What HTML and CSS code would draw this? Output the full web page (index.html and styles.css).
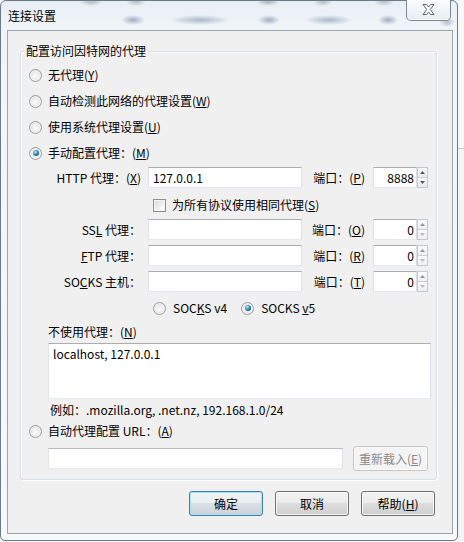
FILE: index.html
```html
<!DOCTYPE html>
<html lang="zh-CN">
<head>
<meta charset="utf-8">
<title>连接设置</title>
<link rel="stylesheet" href="styles.css">
</head>
<body>
<div class="window">
  <div class="titlebar">
    <span class="title">连接设置</span>
    <span class="close">
      <svg width="13" height="11" viewBox="0 0 13 11"><path d="M1 0.5 H4.5 L6.5 3 L8.5 0.5 H12 L8.3 5.5 L12 10.5 H8.5 L6.5 8 L4.5 10.5 H1 L4.7 5.5 Z" fill="#ffffff" stroke="#56636f" stroke-width="1" stroke-linejoin="round"/></svg>
    </span>
  </div>
  <div class="client">
    <fieldset class="group">
      <legend>配置访问因特网的代理</legend>
      <label class="opt"><span class="radio"></span><span>无代理(<u>Y</u>)</span></label>
      <label class="opt"><span class="radio"></span><span>自动检测此网络的代理设置(<u>W</u>)</span></label>
      <label class="opt"><span class="radio"></span><span>使用系统代理设置(<u>U</u>)</span></label>
      <label class="opt"><span class="radio on"></span><span>手动配置代理：(<u>M</u>)</span></label>

      <div class="manual">
        <span class="lbl">HTTP 代理：(<u>X</u>)</span>
        <input class="txt host" value="127.0.0.1">
        <span class="lbl port-lbl">端口：(<u>P</u>)</span>
        <div class="port"><input class="txt num" value="8888"><span class="spin"><span class="up"><svg width="5" height="3" viewBox="0 0 5 3"><path d="M0 3 L2.5 0 L5 3 Z" fill="#4a5866"/></svg></span><span class="down"><svg width="5" height="3" viewBox="0 0 5 3"><path d="M0 0 L2.5 3 L5 0 Z" fill="#4a5866"/></svg></span></span></div>

        <label class="same"><span class="check"></span><span>为所有协议使用相同代理(<u>S</u>)</span></label>

        <span class="lbl">SS<u>L</u> 代理：</span>
        <input class="txt host" value="">
        <span class="lbl port-lbl">端口：(<u>O</u>)</span>
        <div class="port"><input class="txt num" value="0"><span class="spin dim"><span class="up"><svg width="5" height="3" viewBox="0 0 5 3"><path d="M0 3 L2.5 0 L5 3 Z" fill="#8a96a2"/></svg></span><span class="down"><svg width="5" height="3" viewBox="0 0 5 3"><path d="M0 0 L2.5 3 L5 0 Z" fill="#b4bcc4"/></svg></span></span></div>

        <span class="lbl"><u>F</u>TP 代理：</span>
        <input class="txt host" value="">
        <span class="lbl port-lbl">端口：(<u>R</u>)</span>
        <div class="port"><input class="txt num" value="0"><span class="spin dim"><span class="up"><svg width="5" height="3" viewBox="0 0 5 3"><path d="M0 3 L2.5 0 L5 3 Z" fill="#8a96a2"/></svg></span><span class="down"><svg width="5" height="3" viewBox="0 0 5 3"><path d="M0 0 L2.5 3 L5 0 Z" fill="#b4bcc4"/></svg></span></span></div>

        <span class="lbl">SO<u>C</u>KS 主机：</span>
        <input class="txt host" value="">
        <span class="lbl port-lbl">端口：(<u>T</u>)</span>
        <div class="port"><input class="txt num" value="0"><span class="spin dim"><span class="up"><svg width="5" height="3" viewBox="0 0 5 3"><path d="M0 3 L2.5 0 L5 3 Z" fill="#8a96a2"/></svg></span><span class="down"><svg width="5" height="3" viewBox="0 0 5 3"><path d="M0 0 L2.5 3 L5 0 Z" fill="#b4bcc4"/></svg></span></span></div>
      </div>

      <div class="socks">
        <label class="opt2"><span class="radio"></span><span>SOC<u>K</u>S v4</span></label>
        <label class="opt2 v5"><span class="radio on"></span><span>SOCKS <u>v</u>5</span></label>
      </div>

      <div class="noproxy">不使用代理：(<u>N</u>)</div>
      <textarea class="area">localhost, 127.0.0.1</textarea>
      <div class="example">例如：.mozilla.org, .net.nz, 192.168.1.0/24</div>

      <label class="opt"><span class="radio"></span><span>自动代理配置 URL：(<u>A</u>)</span></label>
      <div class="url-row">
        <input class="txt url" value="" disabled>
        <button class="btn reload" disabled>重新载入(<u>E</u>)</button>
      </div>
    </fieldset>

    <div class="buttons">
      <button class="btn default">确定</button>
      <button class="btn">取消</button>
      <button class="btn">帮助(<u>H</u>)</button>
    </div>
  </div>
</div>
</body>
</html>
```

FILE: styles.css
```css
html, body {
  margin: 0;
  padding: 0;
}

body {
  width: 464px;
  height: 542px;
  overflow: hidden;
  background: linear-gradient(#f7f7f7 0, #f7f7f7 148px, #c9c9c9 148px, #c9c9c9 149px, #f4f4f4 149px);
  font-family: "Noto Sans CJK SC", "Liberation Sans", sans-serif;
  font-size: 12px;
  color: #000;
}

.window {
  width: 458px;
  height: 541px;
  box-sizing: border-box;
  border: 1px solid #6d7a86;
  border-radius: 6px 6px 5px 5px;
  padding: 0 4px 6px 6px;
  display: flex;
  flex-direction: column;
  background:
    radial-gradient(ellipse 12px 5px at 132px 19px, rgba(60, 85, 130, 0.45), transparent),
    radial-gradient(ellipse 30px 5px at 199px 19px, rgba(60, 85, 130, 0.38), transparent),
    radial-gradient(ellipse 11px 5px at 268px 19px, rgba(60, 85, 130, 0.45), transparent),
    radial-gradient(ellipse 24px 5px at 328px 19px, rgba(60, 85, 130, 0.38), transparent),
    radial-gradient(ellipse 10px 5px at 387px 19px, rgba(60, 85, 130, 0.45), transparent),
    radial-gradient(ellipse 8px 5px at 446px 21px, rgba(60, 85, 130, 0.35), transparent),
    radial-gradient(ellipse 12px 4px at 90px 1px, rgba(60, 70, 90, 0.3), transparent),
    radial-gradient(ellipse 10px 4px at 135px 1px, rgba(60, 70, 90, 0.3), transparent),
    radial-gradient(ellipse 12px 4px at 267px 1px, rgba(60, 70, 90, 0.35), transparent),
    radial-gradient(ellipse 10px 4px at 322px 1px, rgba(60, 70, 90, 0.3), transparent),
    radial-gradient(ellipse 10px 4px at 383px 1px, rgba(60, 70, 90, 0.3), transparent),
    linear-gradient(#e8eff4 0, #f1f5f8 30px, #f6f9fb 100%);
}

.titlebar {
  height: 29px;
  display: flex;
  align-items: flex-start;
}

.title {
  line-height: 29px;
  padding-left: 1px;
  color: #000;
}

.close {
  margin-left: auto;
  margin-right: 2px;
  margin-top: -1px;
  width: 45px;
  height: 21px;
  box-sizing: border-box;
  border: 1px solid rgba(85, 98, 112, 0.75);
  border-top: none;
  border-radius: 0 0 5px 5px;
  background: linear-gradient(#fbfcfd, #eef3f7 60%, #e6edf2);
  box-shadow: inset 0 -1px 0 rgba(255, 255, 255, 0.9);
  display: flex;
  align-items: center;
  justify-content: center;
  padding-bottom: 1px;
}

.close svg {
  display: block;
}

.client {
  flex: 1;
  background: #f0f0f0;
  border: 1px solid #9aa6b1;
  padding: 12px 15px 0 12px;
  display: flex;
  flex-direction: column;
}

.group {
  margin: 0;
  min-width: 0;
  border: 1px solid #d5dfe5;
  border-radius: 3px;
  box-shadow: inset 1px 1px 0 #ffffff, 1px 1px 0 #ffffff;
  padding: 3px 0 8px 8px;
}

.group legend {
  padding: 0 2px;
  margin-left: -5px;
  line-height: 16px;
}

.opt {
  display: flex;
  align-items: center;
  gap: 6px;
  height: 26px;
  line-height: 16px;
}

.radio {
  flex: none;
  position: relative;
  width: 13px;
  height: 13px;
  box-sizing: border-box;
  border-radius: 50%;
  border: 1px solid #9a9b9c;
  background: radial-gradient(circle at 50% 55%, #fbfbfb 0, #f0f0f0 35%, #d4d4d4 100%);
  box-shadow: inset 0 0 0 1px rgba(255, 255, 255, 0.6);
}

.radio.on::after {
  content: "";
  position: absolute;
  left: 2.5px;
  top: 2.5px;
  width: 6px;
  height: 6px;
  border-radius: 50%;
  background: radial-gradient(circle at 38% 35%, #c4ecfb 0, #3c98c4 40%, #165273 75%, #0d3a55 100%);
}

.check {
  flex: none;
  width: 13px;
  height: 13px;
  box-sizing: border-box;
  border: 1px solid #8f8f8f;
  background: linear-gradient(135deg, #d8d8d8, #f6f6f6 70%, #fdfdfd);
  box-shadow: inset 0 0 0 1px #f4f4f4;
}

.manual {
  display: grid;
  grid-template-columns: 119px 154px 71px 55px;
  grid-auto-rows: 21px;
  row-gap: 5px;
  margin-top: 1px;
}

.lbl {
  text-align: right;
  padding-right: 7px;
  line-height: 21px;
  white-space: nowrap;
}

.port-lbl {
  padding-right: 8px;
}

.txt {
  box-sizing: border-box;
  height: 21px;
  margin: 0;
  padding: 0 4px;
  border: 1px solid;
  border-color: #abadb3 #dbdfe6 #e3e9ef #e2e3ea;
  background: #fff;
  font-family: "Noto Sans CJK SC", "Liberation Sans", sans-serif;
  font-size: 12px;
  color: #000;
  outline: none;
}

.host {
  width: 154px;
}

.port {
  display: flex;
}

.num {
  width: 44px;
  text-align: right;
  padding-right: 2px;
}

.spin {
  width: 11px;
  height: 21px;
  display: flex;
  flex-direction: column;
  box-sizing: border-box;
  border: 1px solid #c4cad1;
}

.spin span {
  flex: 1;
  display: flex;
  align-items: center;
  justify-content: center;
  background: linear-gradient(#f8f9fa, #e7eaed);
}

.spin span + span {
  border-top: 1px solid #c9cfd5;
}

.spin.dim span {
  background: linear-gradient(#fafafa, #eeeff0);
}

.spin svg {
  display: block;
}

.same {
  grid-column: 2 / 5;
  display: flex;
  align-items: center;
  gap: 6px;
  padding-left: 5px;
  padding-top: 3px;
  line-height: 16px;
}

.socks {
  display: flex;
  align-items: center;
  height: 24px;
  margin-top: 4px;
  padding-left: 124px;
}

.opt2 {
  display: flex;
  align-items: center;
  gap: 7px;
  line-height: 16px;
}

.opt2.v5 {
  margin-left: 14px;
}

.noproxy {
  margin: 4px 0 0 19px;
  line-height: 16px;
}

.area {
  display: block;
  box-sizing: border-box;
  width: 383px;
  height: 56px;
  margin: 3px 0 0 19px;
  padding: 2px 4px;
  resize: none;
  border: 1px solid;
  border-color: #abadb3 #dbdfe6 #e3e9ef #e2e3ea;
  background: #fff;
  font-family: "Noto Sans CJK SC", "Liberation Sans", sans-serif;
  font-size: 12px;
  line-height: 16px;
  color: #000;
  outline: none;
  overflow: hidden;
}

.example {
  margin: 3px 0 0 21px;
  line-height: 16px;
}

.url-row {
  display: flex;
  align-items: center;
  gap: 10px;
  height: 25px;
  margin: 2px 0 0 19px;
}

.url {
  width: 295px;
  border-color: #b8bcc2 #dde1e6 #e5e9ee #e2e4ea;
}

.btn {
  box-sizing: border-box;
  width: 74px;
  height: 25px;
  margin: 0;
  padding: 0;
  border: 1px solid #707070;
  border-radius: 3px;
  background: linear-gradient(#f2f2f2 0, #ebebeb 49%, #dddddd 50%, #cfcfcf 100%);
  box-shadow: inset 0 0 0 1px rgba(252, 252, 252, 0.85);
  font-family: "Noto Sans CJK SC", "Liberation Sans", sans-serif;
  font-size: 12px;
  color: #000;
  line-height: 16px;
}

.btn.default {
  border-color: #3c7fb1;
  box-shadow: inset 0 0 0 1px #a8e0f6;
  background: linear-gradient(#f1f4f6 0, #e9eef1 49%, #d9dfe3 50%, #ccd3d8 100%);
}

.btn.reload {
  width: 75px;
  border-color: #c2c6c9;
  background: #f4f4f4;
  box-shadow: inset 0 0 0 1px #fbfbfb;
  color: #8a8a8a;
}

.buttons {
  display: flex;
  justify-content: flex-end;
  gap: 12px;
  margin-top: 11px;
  padding-right: 2px;
}
```
